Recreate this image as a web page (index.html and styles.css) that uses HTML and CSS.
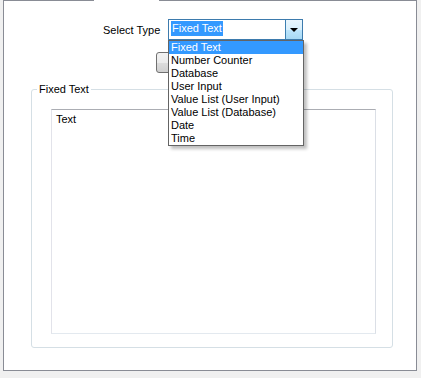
FILE: index.html
```html
<!DOCTYPE html>
<html lang="en">
<head>
  <meta charset="UTF-8" />
  <title>Field Type</title>
  <link rel="stylesheet" href="styles.css">
</head>
<body>
  <div class="page">
    <span class="tab-seam"></span>

    <div class="type-row">
      <label class="type-label">Select Type</label>
      <div class="combo">
        <span class="combo-value"><span class="selected-text">Fixed Text</span></span>
        <span class="combo-button"><span class="arrow"></span></span>

        <ul class="dropdown">
          <li class="active">Fixed Text</li>
          <li>Number Counter</li>
          <li>Database</li>
          <li>User Input</li>
          <li>Value List (User Input)</li>
          <li>Value List (Database)</li>
          <li>Date</li>
          <li>Time</li>
        </ul>
      </div>
    </div>

    <div class="button-row">
      <button class="btn" aria-label="Apply"></button>
    </div>

    <fieldset class="group">
      <legend>Fixed Text</legend>
      <div class="textbox">Text</div>
    </fieldset>
  </div>
</body>
</html>
```

FILE: styles.css
```css
body {
  margin: 0;
  background: #f0f0f0;
  font-family: 'Liberation Sans', Arial, sans-serif;
  font-size: 11px;
  color: #000;
}

.page {
  position: relative;
  box-sizing: border-box;
  width: 414px;
  height: 371px;
  margin-left: 3px;
  background: #fff;
  border: 1px solid #898c95;
}

.tab-seam {
  position: absolute;
  top: -1px;
  left: 90px;
  width: 65px;
  height: 1px;
  background: #fff;
}

.type-row {
  display: flex;
  align-items: center;
  margin-top: 18px;
  padding-left: 99px;
  height: 21px;
}

.type-label {
  width: 65px;
}

.combo {
  position: relative;
  box-sizing: border-box;
  width: 135px;
  height: 21px;
  border: 1px solid #3d7bad;
  background: #fff;
  display: flex;
}

.combo-value {
  flex: 1;
  padding: 1px 0 0 2px;
}

.selected-text {
  display: inline-block;
  background: #3399ff;
  color: #fff;
  line-height: 15px;
  padding: 0 1px;
}

.combo-button {
  box-sizing: border-box;
  width: 17px;
  border-left: 1px solid #3c7fb1;
  background: linear-gradient(#eaf6fd, #d9f0fc 50%, #bee6fd 50%, #a7d9f5);
  display: flex;
  align-items: center;
  justify-content: center;
}

.arrow {
  width: 0;
  height: 0;
  border-left: 4px solid transparent;
  border-right: 4px solid transparent;
  border-top: 4px solid #000;
  margin-top: 1px;
}

.dropdown {
  position: absolute;
  top: 20px;
  left: -1px;
  z-index: 2;
  box-sizing: border-box;
  width: 136px;
  margin: 0;
  padding: 0;
  list-style: none;
  background: #fff;
  border: 1px solid #646464;
  box-shadow: 3px 3px 3px rgba(0, 0, 0, 0.25);
}

.dropdown li {
  height: 13px;
  line-height: 13px;
  padding-left: 2px;
  white-space: nowrap;
}

.dropdown li.active {
  background: #3399ff;
  color: #fff;
}

.button-row {
  margin-top: 12px;
  padding-left: 152px;
}

.btn {
  display: block;
  box-sizing: border-box;
  width: 75px;
  height: 21px;
  border: 1px solid #707070;
  border-radius: 3px;
  background: linear-gradient(#f2f2f2, #ebebeb 50%, #dddddd 50%, #cfcfcf);
}

.group {
  margin: 10px 23px 0 27px;
  padding: 13px 16px 13px 19px;
  border: 1px solid #d5dfe5;
  border-radius: 3px;
}

.group legend {
  margin-left: -14px;
  padding: 0 2px;
  line-height: 13px;
}

.textbox {
  box-sizing: border-box;
  height: 225px;
  padding: 3px 4px;
  border: 1px solid;
  border-color: #abadb3 #dbdfe6 #e3e9ef #e2e3ea;
}
```
